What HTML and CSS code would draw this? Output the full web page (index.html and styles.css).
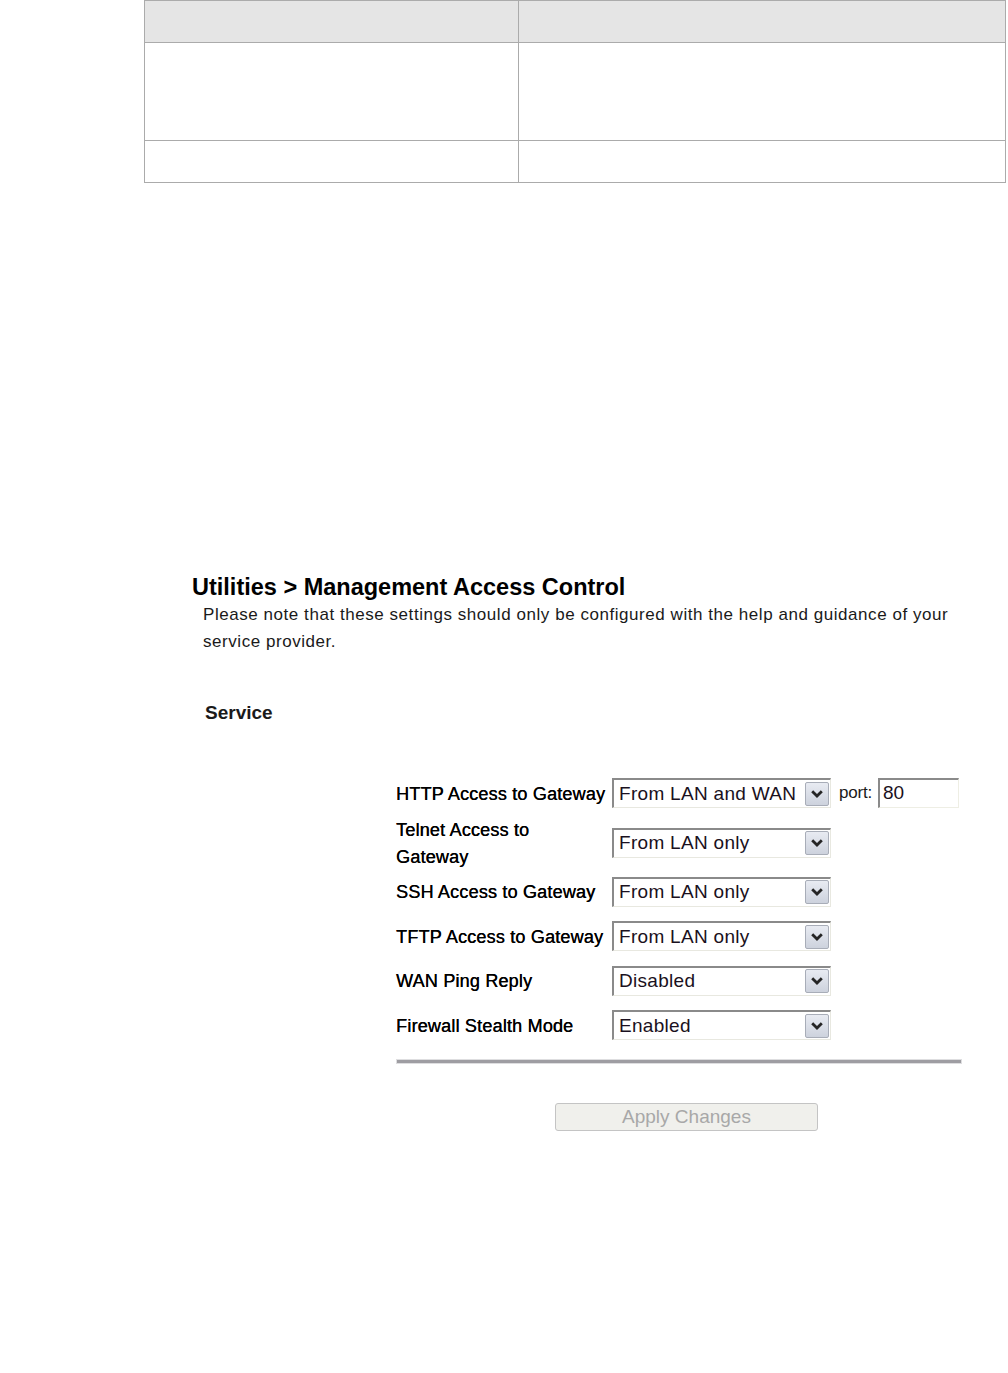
FILE: index.html
```html
<!DOCTYPE html>
<html>
<head>
<meta charset="utf-8">
<link rel="stylesheet" href="styles.css">
</head>
<body>
<table class="doc-table">
  <tr class="head"><td class="c1"></td><td class="c2"></td></tr>
  <tr class="tall"><td></td><td></td></tr>
  <tr class="short"><td></td><td></td></tr>
</table>

<section class="panel">
  <h1 class="title">Utilities &gt; Management Access Control</h1>
  <p class="note">Please note that these settings should only be configured with the help and guidance of your service provider.</p>
  <h2 class="service">Service</h2>

  <div class="form">
    <div class="label">HTTP Access to Gateway</div>
    <div class="field">
      <div class="select"><span class="val">From LAN and WAN</span><span class="btn"><svg width="14" height="10" viewBox="0 0 14 10"><path d="M2.2 2.2 L7 7 L11.8 2.2" fill="none" stroke="#252525" stroke-width="2.8"/></svg></span></div>
      <span class="port">port:</span>
      <div class="input">80</div>
    </div>

    <div class="label">Telnet Access to<br>Gateway</div>
    <div class="field">
      <div class="select"><span class="val">From LAN only</span><span class="btn"><svg width="14" height="10" viewBox="0 0 14 10"><path d="M2.2 2.2 L7 7 L11.8 2.2" fill="none" stroke="#252525" stroke-width="2.8"/></svg></span></div>
    </div>

    <div class="label">SSH Access to Gateway</div>
    <div class="field">
      <div class="select"><span class="val">From LAN only</span><span class="btn"><svg width="14" height="10" viewBox="0 0 14 10"><path d="M2.2 2.2 L7 7 L11.8 2.2" fill="none" stroke="#252525" stroke-width="2.8"/></svg></span></div>
    </div>

    <div class="label">TFTP Access to Gateway</div>
    <div class="field">
      <div class="select"><span class="val">From LAN only</span><span class="btn"><svg width="14" height="10" viewBox="0 0 14 10"><path d="M2.2 2.2 L7 7 L11.8 2.2" fill="none" stroke="#252525" stroke-width="2.8"/></svg></span></div>
    </div>

    <div class="label">WAN Ping Reply</div>
    <div class="field">
      <div class="select"><span class="val">Disabled</span><span class="btn"><svg width="14" height="10" viewBox="0 0 14 10"><path d="M2.2 2.2 L7 7 L11.8 2.2" fill="none" stroke="#252525" stroke-width="2.8"/></svg></span></div>
    </div>

    <div class="label">Firewall Stealth Mode</div>
    <div class="field">
      <div class="select"><span class="val">Enabled</span><span class="btn"><svg width="14" height="10" viewBox="0 0 14 10"><path d="M2.2 2.2 L7 7 L11.8 2.2" fill="none" stroke="#252525" stroke-width="2.8"/></svg></span></div>
    </div>
  </div>

  <div class="rule"></div>
  <button class="apply" type="button">Apply Changes</button>
</section>
</body>
</html>
```

FILE: styles.css
```css
html, body {
  margin: 0;
  padding: 0;
  background: #ffffff;
}
body {
  font-family: "Liberation Sans", Arial, sans-serif;
  color: #000;
}

.doc-table {
  margin-left: 144px;
  width: 862px;
  border-collapse: collapse;
}
.doc-table td {
  border: 1px solid #ababab;
  padding: 0;
}
.doc-table .head td {
  background: #e5e5e5;
  height: 41px;
}
.doc-table .c1 {
  width: 373px;
}
.doc-table .tall td {
  height: 97px;
}
.doc-table .short td {
  height: 41px;
}

.panel {
  margin-left: 192px;
  margin-top: 390px;
}
.title {
  margin: 0;
  font-size: 23.5px;
  line-height: 28px;
  font-weight: bold;
  color: #000;
}
.note {
  margin: 0 0 0 11px;
  width: 770px;
  font-size: 17px;
  line-height: 27px;
  letter-spacing: 0.55px;
  color: #1a1a1a;
}
.service {
  margin: 44px 0 0 13px;
  font-size: 19px;
  line-height: 27px;
  font-weight: bold;
  color: #1a1a1a;
}

.form {
  margin: 45px 0 0 204px;
  display: grid;
  grid-template-columns: 216px auto;
  grid-auto-rows: minmax(44.5px, auto);
  align-items: center;
}
.label {
  padding-top: 1px;
  margin-bottom: -1px;
  font-size: 18px;
  line-height: 27px;
  letter-spacing: 0.2px;
  color: #000;
  text-shadow: 0.3px 0 0 #000;
}
.field {
  display: flex;
  align-items: center;
  min-height: 44px;
}
.select {
  box-sizing: border-box;
  width: 219px;
  height: 30px;
  display: flex;
  align-items: center;
  justify-content: space-between;
  border-style: solid;
  border-width: 2px 1px 1px 2px;
  border-color: #8a8a8a #e8e8e0 #e8e8e0 #8a8a8a;
  background: #fff;
  padding: 0 1px 0 5px;
}
.val {
  font-size: 19px;
  letter-spacing: 0.3px;
  color: #1a1020;
}
.btn {
  box-sizing: border-box;
  width: 24px;
  height: 24px;
  display: flex;
  align-items: center;
  justify-content: center;
  border: 1px solid #a8adb8;
  border-radius: 2px;
  background: linear-gradient(#e8ebf2, #cdd2dd);
}
.port {
  margin-left: 8px;
  font-size: 17px;
  color: #1a1a1a;
  letter-spacing: -0.2px;
}
.input {
  box-sizing: border-box;
  margin-left: 6px;
  width: 81px;
  height: 30px;
  border-style: solid;
  border-width: 2px 1px 1px 2px;
  border-color: #8a8a8a #eeeee4 #eeeee4 #8a8a8a;
  padding: 0 3px;
  font-size: 19px;
  line-height: 26px;
  color: #1a1020;
}

.rule {
  box-sizing: border-box;
  margin: 11px 0 0 204px;
  width: 566px;
  height: 5px;
  background: #9e9da2;
  border: 1px solid #dedee0;
}
.apply {
  display: block;
  box-sizing: border-box;
  margin: 39px 0 0 363px;
  width: 263px;
  height: 28px;
  padding: 0;
  border: 1px solid #c4c4c4;
  border-radius: 3px;
  background: #f0f0ec;
  font-family: "Liberation Sans", Arial, sans-serif;
  font-size: 19px;
  color: #a8a8a8;
}
```
